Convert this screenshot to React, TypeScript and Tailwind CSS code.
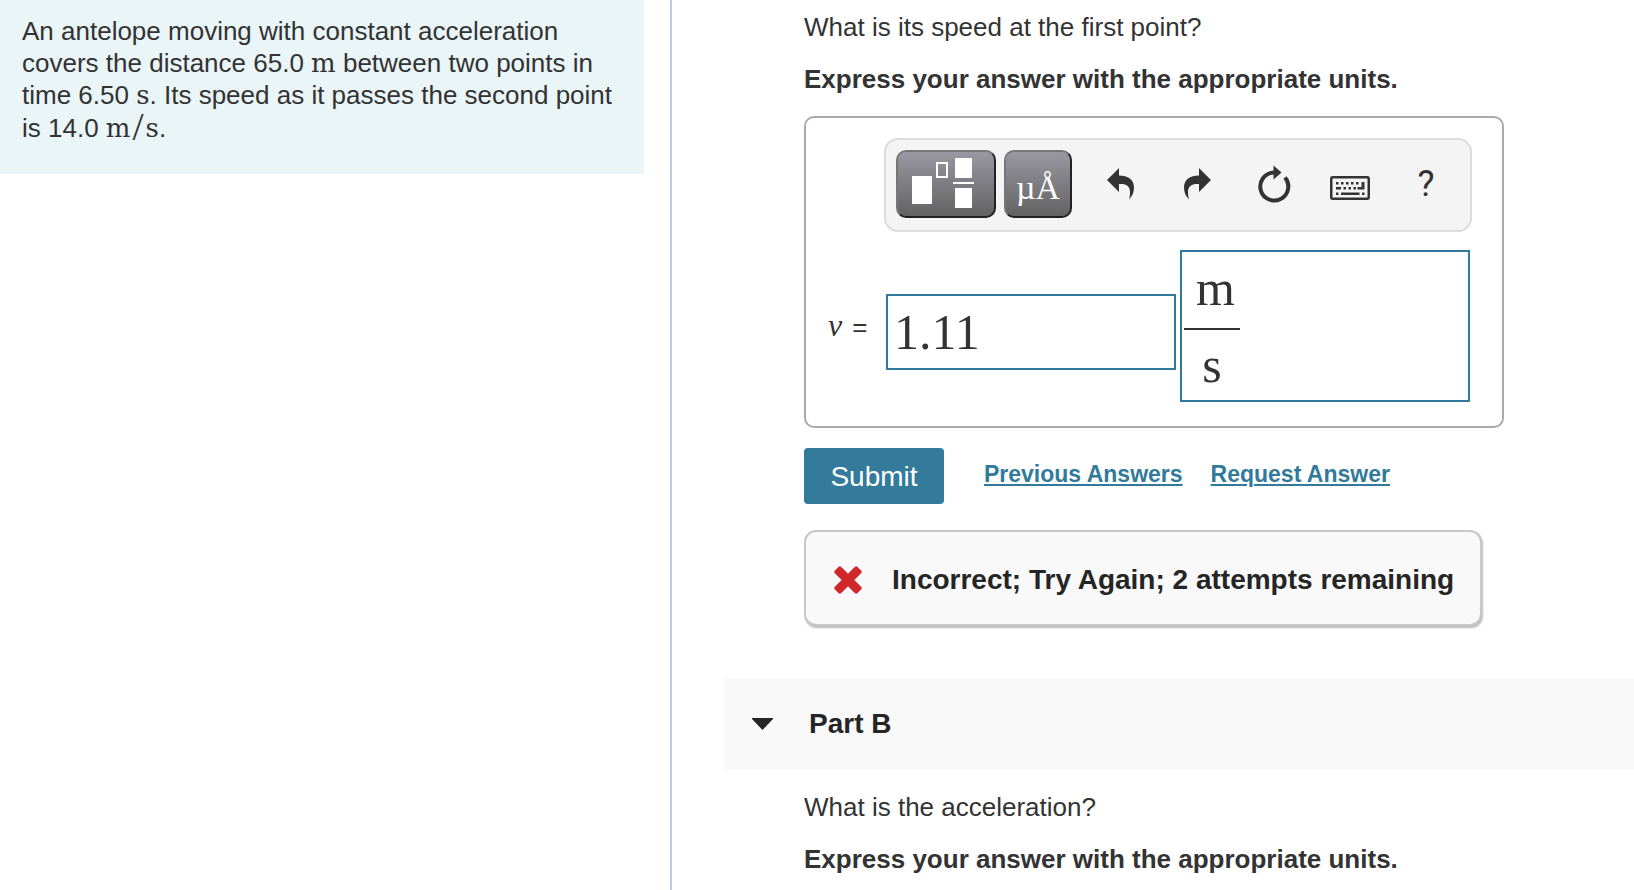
import { useState, type ReactNode } from "react";

interface ToolButtonProps {
  label: string;
  children: ReactNode;
}

function ToolButton({ label, children }: ToolButtonProps) {
  return (
    <button
      type="button"
      aria-label={label}
      className="flex h-[68px] w-[76px] items-center justify-center text-[#333]"
    >
      {children}
    </button>
  );
}

function TemplatesIcon() {
  return (
    <svg width="64" height="52" viewBox="0 0 64 52" aria-hidden="true">
      <rect x="0" y="18" width="20" height="28" fill="#fff" />
      <rect x="25" y="5" width="10" height="14" fill="none" stroke="#fff" strokeWidth="2" />
      <rect x="43" y="0" width="17" height="20" fill="#fff" />
      <rect x="41" y="24" width="21" height="2" fill="#fff" />
      <rect x="43" y="30" width="17" height="20" fill="#fff" />
    </svg>
  );
}

function ArrowIcon({ flipped = false }: { flipped?: boolean }) {
  return (
    <svg
      width="28"
      height="32"
      viewBox="0 0 28 32"
      fill="currentColor"
      className={flipped ? "-scale-x-100" : ""}
      aria-hidden="true"
    >
      <path d="M12 0 L0 12 L12 24 V16 C19 15.500 23 18 23 24 C23 26.500 22.800 29 22 31.500 C25.500 28 27 24 27 19.500 C27 11.500 21 7.500 12 7.500 Z" />
    </svg>
  );
}

function ResetIcon() {
  return (
    <svg width="34" height="38" viewBox="0 0 34 38" aria-hidden="true">
      <path
        d="M28 12.500 A14 14 0 1 1 17 7.500"
        fill="none"
        stroke="currentColor"
        strokeWidth="4"
      />
      <path d="M16.500 0.500 L24.500 7.500 L16.500 14.500 Z" fill="currentColor" />
    </svg>
  );
}

function KeyboardIcon() {
  return (
    <svg width="40" height="24" viewBox="0 0 40 24" fill="currentColor" aria-hidden="true">
      <rect x="1.250" y="1.250" width="37.500" height="21.500" rx="1.500" fill="none" stroke="currentColor" strokeWidth="2.500" />
      {[6, 11, 16, 21, 26].map((x) => (
        <rect key={x} x={x} y="6" width="2.500" height="2.500" />
      ))}
      <path d="M31.500 6 H34.500 V13.500 H27.500 V11 H31.500 Z" />
      <rect x="6" y="11" width="5" height="2.500" />
      {[13.5, 18.5, 23.5].map((x) => (
        <rect key={x} x={x} y="11" width="2.500" height="2.500" />
      ))}
      <rect x="6" y="16.500" width="2.500" height="2.500" />
      <rect x="11" y="16.500" width="18.500" height="2.500" />
      <rect x="32" y="16.500" width="2.500" height="2.500" />
    </svg>
  );
}

function IncorrectIcon() {
  return (
    <svg width="28" height="28" viewBox="0 0 28 28" fill="#d0272b" aria-hidden="true">
      <rect x="-2" y="9.500" width="32" height="9" rx="2" transform="rotate(45 14 14)" />
      <rect x="-2" y="9.500" width="32" height="9" rx="2" transform="rotate(-45 14 14)" />
    </svg>
  );
}

function Unit({ children }: { children: ReactNode }) {
  return <span className="font-['DejaVu_Serif',serif] text-[26px] leading-6">{children}</span>;
}

function Question({ children }: { children: ReactNode }) {
  return (
    <>
      <p>{children}</p>
      <p className="mt-5 font-bold">Express your answer with the appropriate units.</p>
    </>
  );
}

const grayButton =
  "flex h-[68px] shrink-0 items-center justify-center rounded-[10px] border-2 border-t-[#777] border-l-[#777] border-r-[#222] border-b-[#222] bg-linear-to-b from-[#9a98a2] to-[#636363] text-white";

const mathInput =
  "block bg-transparent font-['Liberation_Serif',serif] text-[50px] text-[#333] outline-none";

export default function App() {
  const [value, setValue] = useState("1.11");
  const [numerator, setNumerator] = useState("m");
  const [denominator, setDenominator] = useState("s");

  return (
    <div className="grid h-screen grid-cols-[672fr_962fr] overflow-hidden bg-white font-['Liberation_Sans',Arial,sans-serif] text-[26px] leading-8 text-[#333]">
      <aside className="border-r-2 border-[#bdcadb] pr-[26px]">
        <p className="bg-[#eaf5f8] px-[22px] pt-[15px] pb-[30px]">
          An antelope moving with constant acceleration covers the distance 65.0 <Unit>m</Unit>{" "}
          between two points in time 6.50 <Unit>s</Unit>. Its speed as it passes the second point
          is 14.0 <Unit>m</Unit>
          <span className="px-[2px] align-[-3px] font-['Liberation_Serif',serif] text-[40px] leading-8">
            /
          </span>
          <Unit>s</Unit>.
        </p>
      </aside>

      <main className="min-w-0 pl-[52px]">
        <section className="pt-[11px] pr-6 pl-20">
          <Question>What is its speed at the first point?</Question>

          <form className="mt-[21px]" onSubmit={(e) => e.preventDefault()}>
            <div className="max-w-[700px] rounded-[10px] border-2 border-[#aaa] py-5 pr-[30px] pl-5">
              <div className="ml-[58px] flex gap-2 rounded-[14px] border-2 border-[#ddd] bg-[#f4f4f4] pt-[10px] pr-[6px] pb-3 pl-[10px]">
                <button
                  type="button"
                  aria-label="Templates"
                  className={`${grayButton} w-[100px] pr-1`}
                >
                  <TemplatesIcon />
                </button>
                <button
                  type="button"
                  aria-label="Symbols"
                  className={`${grayButton} w-[68px] pt-2 font-['Liberation_Serif',serif] text-[34px]`}
                >
                  µÅ
                </button>
                <div className="flex flex-1 justify-between pl-[3px]">
                  <ToolButton label="Undo">
                    <ArrowIcon />
                  </ToolButton>
                  <ToolButton label="Redo">
                    <ArrowIcon flipped />
                  </ToolButton>
                  <ToolButton label="Reset">
                    <ResetIcon />
                  </ToolButton>
                  <ToolButton label="Keyboard shortcuts">
                    <span className="pt-2">
                      <KeyboardIcon />
                    </span>
                  </ToolButton>
                  <ToolButton label="Help">
                    <span className="font-[Roboto,sans-serif] text-[36px]">?</span>
                  </ToolButton>
                </div>
              </div>

              <div className="mt-[18px] flex items-center pr-[2px]">
                <label
                  htmlFor="answer"
                  className="flex w-[60px] shrink-0 items-baseline gap-[10px] pl-[2px]"
                >
                  <i className="font-['Liberation_Serif',serif] text-[32px]">v</i>
                  <span>=</span>
                </label>
                <div className="grid flex-1 grid-cols-2 items-center gap-1">
                  <input
                    id="answer"
                    value={value}
                    onChange={(e) => setValue(e.target.value)}
                    className={`${mathInput} mt-3 h-[76px] w-full border-2 border-[#317a9c] px-[6px]`}
                  />
                  <div className="h-[152px] border-2 border-[#317a9c] px-[2px]">
                    <input
                      aria-label="Units numerator"
                      value={numerator}
                      onChange={(e) => setNumerator(e.target.value)}
                      className={`${mathInput} h-[78px] w-14 border-b-2 border-[#333] pb-[4px] pl-3`}
                    />
                    <input
                      aria-label="Units denominator"
                      value={denominator}
                      onChange={(e) => setDenominator(e.target.value)}
                      className={`${mathInput} h-[70px] w-14 text-center`}
                    />
                  </div>
                </div>
              </div>
              <div className="h-1" />
            </div>

            <div className="mt-5 flex items-center">
              <button
                type="submit"
                className="h-14 w-[140px] rounded-[4px] bg-[#337a9b] pt-[2px] text-[28px] text-white"
              >
                Submit
              </button>
              <div className="flex gap-7 pb-1 pl-10 text-[23px] font-bold text-[#317a9c]">
                <a href="#previous" className="underline decoration-2 underline-offset-2">
                  Previous Answers
                </a>
                <a href="#request" className="underline decoration-2 underline-offset-2">
                  Request Answer
                </a>
              </div>
            </div>
          </form>

          <div
            role="status"
            className="mt-[26px] flex h-24 w-fit items-center gap-[30px] rounded-xl border-2 border-[#c7c7c7] bg-[#f9f9f9] pt-1 pr-[26px] pl-7 text-[28px] font-bold text-[#252525] shadow-[1px_2px_2px_#bbb]"
          >
            <IncorrectIcon />
            <span>Incorrect; Try Again; 2 attempts remaining</span>
          </div>
        </section>

        <section className="mt-[52px]">
          <h2 className="bg-[#f9f9f9] text-[28px] font-bold text-[#252525]">
            <button type="button" className="flex h-[92px] w-full items-center gap-9 pl-7 text-left">
              <svg width="21" height="12" viewBox="0 0 21 12" fill="currentColor" aria-hidden="true">
                <path d="M0 0 H21 V1 L10.500 12 L0 1 Z" />
              </svg>
              Part B
            </button>
          </h2>
          <div className="pt-[21px] pr-6 pl-20">
            <Question>What is the acceleration?</Question>
          </div>
        </section>
      </main>
    </div>
  );
}
